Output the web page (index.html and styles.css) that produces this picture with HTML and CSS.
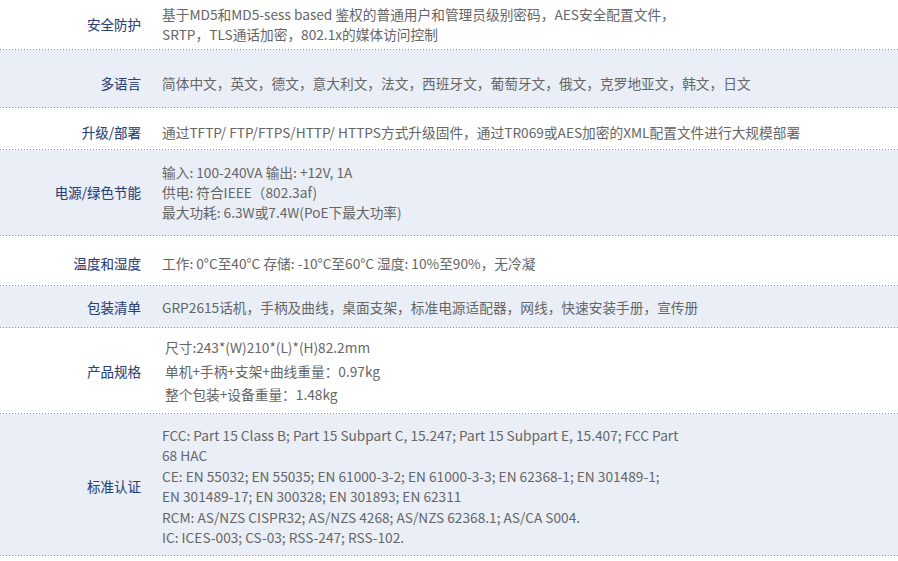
FILE: index.html
```html
<!DOCTYPE html>
<html lang="zh-CN">
<head>
    <meta charset="UTF-8">
    <meta name="viewport" content="width=device-width, initial-scale=1.0">
    <title>GRP2615 技术参数</title>
    <link rel="stylesheet" href="styles.css">
</head>
<body>
    <div class="spec-table">
        <div class="spec-row row-security">
            <div class="spec-name">安全防护</div>
            <div class="spec-value">基于MD5和MD5-sess based 鉴权的普通用户和管理员级别密码，AES安全配置文件，<br>SRTP，TLS通话加密，802.1x的媒体访问控制</div>
        </div>
        <div class="spec-row shaded row-lang">
            <div class="spec-name">多语言</div>
            <div class="spec-value">简体中文，英文，德文，意大利文，法文，西班牙文，葡萄牙文，俄文，克罗地亚文，韩文，日文</div>
        </div>
        <div class="spec-row row-upgrade">
            <div class="spec-name">升级/部署</div>
            <div class="spec-value">通过TFTP/ FTP/FTPS/HTTP/ HTTPS方式升级固件，通过TR069或AES加密的XML配置文件进行大规模部署</div>
        </div>
        <div class="spec-row shaded row-power">
            <div class="spec-name">电源/绿色节能</div>
            <div class="spec-value">输入: 100-240VA 输出: +12V, 1A<br>供电: 符合IEEE（802.3af)<br>最大功耗: 6.3W或7.4W(PoE下最大功率)</div>
        </div>
        <div class="spec-row row-temp">
            <div class="spec-name">温度和湿度</div>
            <div class="spec-value">工作: 0°C至40°C 存储: -10°C至60°C 湿度: 10%至90%，无冷凝</div>
        </div>
        <div class="spec-row shaded row-package">
            <div class="spec-name">包装清单</div>
            <div class="spec-value">GRP2615话机，手柄及曲线，桌面支架，标准电源适配器，网线，快速安装手册，宣传册</div>
        </div>
        <div class="spec-row row-size">
            <div class="spec-name">产品规格</div>
            <div class="spec-value loose">尺寸:243*(W)210*(L)*(H)82.2mm<br>单机+手柄+支架+曲线重量：0.97kg<br>整个包装+设备重量：1.48kg</div>
        </div>
        <div class="spec-row shaded row-cert">
            <div class="spec-name">标准认证</div>
            <div class="spec-value">FCC: Part 15 Class B; Part 15 Subpart C, 15.247; Part 15 Subpart E, 15.407; FCC Part<br>68 HAC<br>CE: EN 55032; EN 55035; EN 61000-3-2; EN 61000-3-3; EN 62368-1; EN 301489-1;<br>EN 301489-17; EN 300328; EN 301893; EN 62311<br>RCM: AS/NZS CISPR32; AS/NZS 4268; AS/NZS 62368.1; AS/CA S004.<br>IC: ICES-003; CS-03; RSS-247; RSS-102.</div>
        </div>
    </div>
</body>
</html>
```

FILE: styles.css
```css
/* page */
* {
    margin: 0;
    padding: 0;
    box-sizing: border-box;
}

body {
    background: #fff;
    font-family: "Noto Sans CJK SC", "Noto Sans", sans-serif;
    font-size: 14px;
    line-height: 20px;
    color: #666;
}

/* spec table */
.spec-row {
    display: grid;
    grid-template-columns: 152px 1fr;
    align-items: center;
    background: linear-gradient(to right, #8d9299 1px, transparent 1px) left bottom / 3px 1px repeat-x, #fff;
}

.spec-row.shaded {
    background: linear-gradient(to right, #8d9299 1px, transparent 1px) left bottom / 3px 1px repeat-x, #eaeff7;
}

.spec-name {
    text-align: right;
    padding-right: 11px;
    font-size: 13.5px;
    font-weight: normal;
    color: #2a4178;
    -webkit-text-stroke: 0.1px #2a4178;
}

.spec-value {
    padding-left: 10px;
    font-size: 13.7px;
}

.spec-value.loose {
    padding-left: 13px;
    line-height: 23.5px;
}

/* row spacing */
.row-security { padding: 4px 0 6px; }
.row-lang { padding: 23px 0 15px; }
.row-upgrade { padding: 14px 0 8px; }
.row-power { padding: 12px 0 14px; }
.row-temp { padding: 17px 0 13px; }
.row-package { padding: 11px 0 11px; }
.row-size { padding: 8px 0 7px; }
.row-cert { padding: 11px 0 8px; }

.row-cert .spec-value {
    line-height: 20.5px;
}
```
